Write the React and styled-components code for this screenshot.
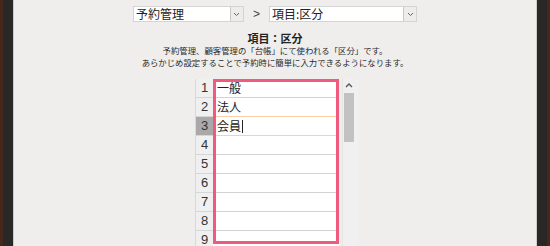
import React from "react";
import styled, { createGlobalStyle } from "styled-components";

const GlobalStyle = createGlobalStyle`
  html, body { margin: 0; padding: 0; }
  body {
    background: #efeeec;
    font-family: "Noto Sans CJK JP", "Noto Sans", sans-serif;
    color: #333;
  }
`;

const Page = styled.div`
  display: flex;
  height: 246px;
  overflow: hidden;
  background: #efeeec;
`;

const Frame = styled.div`
  width: 14px;
  flex: none;
  background: ${(p) =>
    p.$side === "left"
      ? "linear-gradient(to right, #45271b 0 3px, #2a2727 3px 13px, #cfcdca 13px 14px)"
      : "linear-gradient(to left, #45271b 0 3px, #2a2727 3px 13px, #cfcdca 13px 14px)"};
`;

const Main = styled.div`
  flex: 1;
  display: flex;
  flex-direction: column;
  align-items: center;
  padding-top: 6px;
`;

const SelectRow = styled.div`
  display: flex;
  align-items: center;
  height: 16px;
`;

const Select = styled.div`
  width: ${(p) => p.$w}px;
  height: 16px;
  box-sizing: border-box;
  background: #fff;
  border: 1px solid #d4d4d4;
  display: flex;
  align-items: center;
  justify-content: space-between;
  font-size: 12px;
  line-height: 14px;
  color: #222;
  padding-left: 2px;
`;

const Arrow = styled.div`
  width: 13px;
  height: 14px;
  box-sizing: border-box;
  border-left: 1px solid #c8c8c8;
  background: #ececec;
  display: flex;
  align-items: center;
  justify-content: center;
`;

const Sep = styled.span`
  font-size: 12px;
  color: #444;
  margin: 0 9px 0 9px;
  font-family: "Liberation Sans", sans-serif;
`;

const Title = styled.div`
  margin-top: 12px;
  font-family: "Liberation Sans", "Noto Sans CJK JP", sans-serif;
  font-size: 11px;
  line-height: 11px;
  font-weight: bold;
  color: #222;
`;

const Desc = styled.div`
  font-family: "Liberation Sans", "Noto Sans CJK JP", sans-serif;
  font-size: 8.4px;
  line-height: 12px;
  text-align: center;
  color: #2a2a2a;
`;

const Grid = styled.div`
  display: flex;
  margin-top: 10px;
  margin-left: 4px;
`;

const NumCol = styled.div`
  width: 17px;
  display: flex;
  flex-direction: column;
  border-left: 1px solid #d8d8d8;
`;

const NumCell = styled.div`
  height: 18px;
  border-bottom: 1px solid #d6d6d6;
  background: ${(p) => (p.$active ? "#a9a9a9" : "#f0f0f0")};
  font-family: "Liberation Sans", sans-serif;
  font-size: 13px;
  line-height: 18px;
  text-align: center;
  color: #333;
`;

const CellCol = styled.div`
  position: relative;
  width: 126px;
  display: flex;
  flex-direction: column;
`;

const Cell = styled.div`
  height: 18px;
  border-bottom: 1px solid ${(p) => (p.$orange ? "#fbcfa8" : "#d2d2d2")};
  background: #fff;
  font-size: 12px;
  line-height: 18px;
  padding-left: 4px;
  color: #222;
  display: flex;
  align-items: center;
`;

const Caret = styled.span`
  display: inline-block;
  width: 1px;
  height: 13px;
  background: #222;
  margin-left: 1px;
`;

const Highlight = styled.div`
  position: absolute;
  left: 0;
  top: 0;
  width: 126px;
  height: 165px;
  box-sizing: border-box;
  border: 3px solid #f05a7e;
  pointer-events: none;
`;

const Scrollbar = styled.div`
  width: 16px;
  margin-left: 3px;
  background: #f0f0f0;
  display: flex;
  flex-direction: column;
  align-items: flex-start;
  border-left: 1px solid #e6e6e6;
`;

const UpBtn = styled.div`
  height: 13px;
  width: 12px;
  display: flex;
  align-items: center;
  justify-content: center;
`;

const Thumb = styled.div`
  width: 10px;
  height: 49px;
  margin-top: 1px;
  margin-left: 1px;
  background: #c2c2c2;
`;

const rows = ["一般", "法人", "会員", "", "", "", "", "", ""];

const Chevron = () => (
  <svg width="7" height="5" viewBox="0 0 7 5">
    <path d="M1 1 L3.5 3.5 L6 1" fill="none" stroke="#666" strokeWidth="1" />
  </svg>
);

export default function App() {
  return (
    <>
      <GlobalStyle />
      <Page>
        <Frame $side="left" />
        <Main>
          <SelectRow>
            <Select $w={111}>
              <span>予約管理</span>
              <Arrow>
                <Chevron />
              </Arrow>
            </Select>
            <Sep>&gt;</Sep>
            <Select $w={148}>
              <span>項目:区分</span>
              <Arrow>
                <Chevron />
              </Arrow>
            </Select>
          </SelectRow>
          <Title>項目：区分</Title>
          <Desc>
            予約管理、顧客管理の「台帳」にて使われる「区分」です。
            <br />
            あらかじめ設定することで予約時に簡単に入力できるようになります。
          </Desc>
          <Grid>
            <NumCol>
              {rows.map((_, i) => (
                <NumCell key={i} $active={i === 2}>
                  {i + 1}
                </NumCell>
              ))}
            </NumCol>
            <CellCol>
              {rows.map((r, i) => (
                <Cell key={i} $orange={i === 1 || i === 2}>
                  {r}
                  {i === 2 && <Caret />}
                </Cell>
              ))}
              <Highlight />
            </CellCol>
            <Scrollbar>
              <UpBtn>
                <svg width="8" height="5" viewBox="0 0 8 5">
                  <path d="M1 4 L4 1 L7 4" fill="none" stroke="#555" strokeWidth="1.4" />
                </svg>
              </UpBtn>
              <Thumb />
            </Scrollbar>
          </Grid>
        </Main>
        <Frame $side="right" />
      </Page>
    </>
  );
}
